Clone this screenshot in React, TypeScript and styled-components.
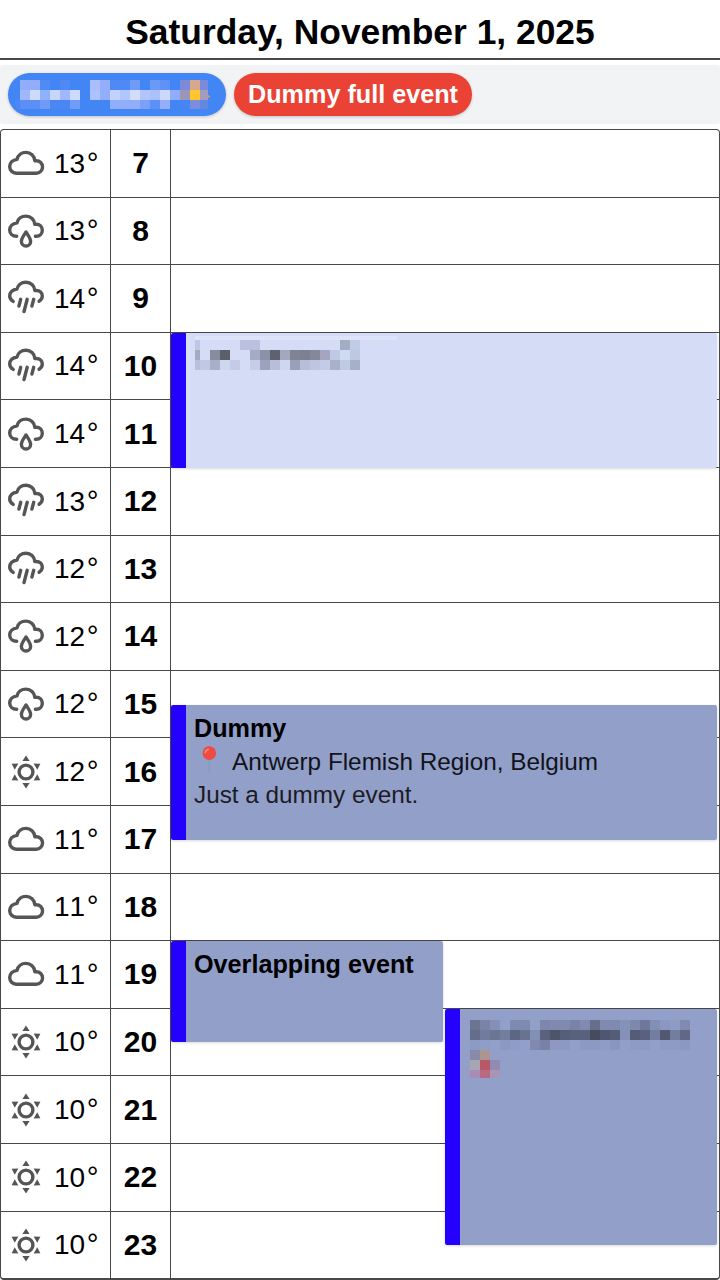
import React from "react";
import styled, { createGlobalStyle } from "styled-components";

const ROW = 67.6;
const FIRST_HOUR = 7;

const GlobalStyle = createGlobalStyle`
  * { box-sizing: border-box; }
  body {
    margin: 0;
    background: #fff;
    color: #000;
    font-family: "Liberation Sans", Arial, sans-serif;
  }
`;

const Page = styled.main`
  width: 720px;
  height: 1280px;
  display: flex;
  flex-direction: column;
  overflow: hidden;
`;

const Title = styled.h1`
  margin: 0;
  height: 60px;
  padding-top: 1px;
  border-bottom: 2px solid #48484a;
  font-size: 35.4px;
  line-height: 62px;
  font-weight: 700;
  text-align: center;
  white-space: nowrap;
`;

const AllDayBar = styled.section`
  display: flex;
  gap: 8px;
  height: 59px;
  margin: 5px 0;
  padding: 8px;
  border-radius: 3px;
  background: #f1f3f4;
`;

const Pill = styled.div<{ $color: string; $width: number }>`
  display: flex;
  align-items: center;
  justify-content: center;
  width: ${(p) => p.$width}px;
  height: 43px;
  border-radius: 21.5px;
  background: ${(p) => p.$color};
  color: #fff;
  font-size: 25.2px;
  font-weight: 700;
  white-space: nowrap;
  box-shadow: 0 1px 3px rgba(0, 0, 0, 0.2);
`;

const Schedule = styled.section`
  display: grid;
  grid-template-columns: 109px 60px 1fr;
  height: 1151px;
  border: solid #48484a;
  border-width: 1px 1px 2px;
  border-radius: 4px;
`;

const Column = styled.div`
  position: relative;
  & + & {
    border-left: 1px solid #48484a;
  }
`;

const Cell = styled.div`
  height: ${ROW}px;
  border-top: 1px solid #48484a;
  display: flex;
  align-items: center;
  font-kerning: none;
  &:first-child {
    height: ${ROW - 1}px;
    border-top: 0;
  }
`;

const WeatherCell = styled(Cell)`
  padding-left: 6px;
  gap: 9px;
`;

const Temperature = styled.span`
  display: flex;
  align-items: baseline;
  font-size: 28px;
  line-height: 32px;
  padding-bottom: 0.2px;
`;

const Degree = styled.span`
  margin-left: 1.5px;
  font-size: 29.5px;
  line-height: 32px;
`;

const HourCell = styled(Cell)`
  justify-content: center;
  font-size: 30px;
  font-weight: 700;
`;

const Icon = styled.svg`
  flex: none;
  fill: none;
  stroke: #555;
  stroke-width: 3.4;
  stroke-linecap: round;
  stroke-linejoin: round;
`;

const EventCard = styled.article<{
  $start: number;
  $hours: number;
  $half?: "left" | "right";
  $light?: boolean;
}>`
  position: absolute;
  top: ${(p) => (p.$start - FIRST_HOUR) * ROW}px;
  left: ${(p) => (p.$half === "right" ? "274px" : "0")};
  width: ${(p) => (p.$half ? 272 : 546)}px;
  height: ${(p) => p.$hours * ROW - 0.2}px;
  padding: 7px 8px;
  border-left: 15px solid #2400ff;
  border-radius: 2px;
  background: ${(p) => (p.$light ? "#d4dcf6" : "#929fc9")};
  box-shadow: 0 1px 3px rgba(0, 0, 0, 0.15);
`;

const EventTitle = styled.h2`
  margin: 0;
  font-size: 25.2px;
  line-height: 33px;
  font-weight: 700;
  white-space: nowrap;
`;

const EventLine = styled.p<{ $faded?: boolean }>`
  margin: 0;
  display: flex;
  align-items: center;
  font-size: 24.3px;
  line-height: 33px;
  color: ${(p) => (p.$faded ? "#1a1c25" : "#111319")};
  white-space: nowrap;
`;

const Pin = styled.svg`
  flex: none;
  margin: -2px 8px 0 0;
`;

const Redaction = styled.svg<{ $dx?: number; $dy?: number }>`
  display: block;
  flex: none;
  margin: ${(p) => p.$dy ?? 0}px 0 0 ${(p) => p.$dx ?? 0}px;
`;

type Block = [x: number, y: number, w: number, h: number, color: string];

function Mosaic({ w, h, dx, dy, blocks }: { w: number; h: number; dx?: number; dy?: number; blocks: Block[] }) {
  return (
    <Redaction width={w} height={h} $dx={dx} $dy={dy} shapeRendering="crispEdges" aria-hidden>
      {blocks.map(([x, y, bw, bh, c], i) => (
        <rect key={i} x={x} y={y} width={bw} height={bh} fill={c} />
      ))}
    </Redaction>
  );
}

/* Expands space separated colours into 10px blocks; "-" leaves a gap. */
const strip = (x: number, y: number, h: number, colors: string): Block[] =>
  colors
    .split(" ")
    .map((c, i): Block => [x + i * 10, y, 10, h, c === "-" ? "none" : "#" + c]);

const pillBlocks: Block[] = [
  ...strip(4, 0, 10, "92adfa 92adfa 4f8bf5 - 4f89f5 - - a9bffc 94aefa 4e89f5 4e89f5 6d9bf6 - 6b99f7 5f92f6 - 7d8ad6 d7a88d"),
  [184, 0, 8, 10, "#7b8bdc"],
  ...strip(4, 10, 10, "a0b7fb ccdafd 8fb0fb c7d6fd a0b8fb ccdafd - adc2fc 92adfa c3d1fd b1c6fc d2dcfb b1c4fb acc1fb ccd9fd 91acfb 9c95bb fdc62f"),
  [184, 10, 8, 10, "#a49cbf"],
  [0, 20, 4, 9, "#4b87f5"],
  ...strip(4, 20, 9, "5b8ff6 5b8ff6 6f9bf7 4a87f5 4a87f5 709cf7 - - - 92adfa 92adfa 92adfa 7ba0f8 5a90f7 94aefa - 4686f3 7d8ddb"),
  [184, 20, 8, 9, "#6488df"],
  [192, 15, 1, 3, "#c99a55"],
  [193, 16, 1, 1, "#e0a12f"],
];

const morningBlocks: Block[] = [
  [0, 0, 202, 4, "#dde3f8"],
  [0, 4, 5, 10, "#bfc8e2"],
  ...strip(45, 4, 10, "bac0dd bac0dd - - - - - - - - a1adc3 c0cbe5"),
  [0, 14, 5, 10, "#a4abc1"],
  ...strip(15, 14, 10, "878c9f 5c6069 - - a5abc2 8b91a6 5e6170 a2a8be 7e8395 7d8091 83889b a4a5be bec9e3 cfd9f1 bdc8e2"),
  [0, 24, 5, 10, "#b9c0dc"],
  ...strip(5, 24, 10, "c1c8e4 a7b0c7 ced7f0 c3cbe6 - c5cde8 9ca2ba b8bed9 ced6f0 9aa0b7 b8bed8 bfc4e0 c3cbe5 a7b1c7 bfcae4 a5b1c6"),
];

const eveningBlocks: Block[] = [
  ...strip(0, 0, 10, "6b7491 7a83a6 8390b7 929fc9 7f8ab0 7f8ab0 - 7c87ab 7f8aaf 7f8aaf 7883a8 7f8bb0 66708d 7f8aaf 7f8aaf 8691b9 7d88ad 6e7898 8390b6 8b97c0 8f9bc5 808bb2"),
  ...strip(0, 10, 10, "646d8a 717b9c 6b7594 737d9e 5e6684 697391 8290b5 5a617d 4e546c 575e79 5a617d 5a617d 464c60 4f566f 555c77 8591b8 555c77 596180 737d9f 51586f 737d9f 606885"),
  ...strip(0, 20, 10, "8d9ac4 909dc7 - 8c97c2 909cc7 - 808ab0 7782a6 8d99c2 8d99c2 - 8d99c2 8d99c2 909cc6 8a96bf - 8f9bc5 8e9ac4 - 8f9bc5 8f9bc5 8c98c1"),
  ...strip(0, 30, 10, "888aa8 aa9591"),
  ...strip(0, 40, 10, "a7a5b4 b85768 918ab2"),
  ...strip(0, 50, 8, "a98cb4 b76a82 a995b3"),
];

type Weather = "cloud" | "drop" | "rain" | "sun";

function WeatherIcon({ kind }: { kind: Weather }) {
  return (
    <Icon width="38" height="36" viewBox="0 0 38 36">
      {kind === "cloud" && (
        <path d="M9.2 28.2H29.3a6.2 6.2 0 0 0 0-12.5H27.8C27.5 10.8 23.7 7.4 19 7.4c-4.5 0-8.1 2.9-9 7C5.7 15 2.7 17.8 2.7 21.6a6.5 6.6 0 0 0 6.5 6.6Z" />
      )}
      {kind === "drop" && (
        <>
          <path d="M9.7 23.3C5.5 23.3 2.7 20.7 2.7 17.1C2.7 13.3 5.7 10.5 10 9.9C10.9 5.8 14.5 3.1 19 3.1C23.7 3.1 27.5 6.5 27.8 11.3H29.3c3.5 0 6 2.6 6 6s-2.5 6-6 6h-.9" />
          <path d="M19 19C17 22.1 14.4 25.3 14.4 28.4a4.6 4.6 0 0 0 9.2 0C23.6 25.3 21 22.1 19 19Z" />
        </>
      )}
      {kind === "rain" && (
        <>
          <path d="M6.2 21.4C4 20.1 2.7 18.4 2.7 16.1C2.7 12.3 5.7 9.6 10 9C10.9 4.9 14.5 2.3 19 2.3C23.7 2.3 27.5 5.7 27.8 10.5H29.3c3.5 0 6 2.4 6 5.6 0 2.3-1.2 4-3.2 5.2" />
          <path d="M13.7 19.3 11.9 26.1M20.2 19.3 17 31.6M26.7 19.3 24.9 26.1" />
        </>
      )}
      {kind === "sun" && (
        <g transform="translate(19 18)">
          <circle r="6.9" strokeWidth="3.4" />
          {[0, 60, 120, 180, 240, 300].map((a) => (
            <path key={a} d="M0-16.6 3.6-10.9H-3.6Z" fill="#555" stroke="none" transform={`rotate(${a})`} />
          ))}
        </g>
      )}
    </Icon>
  );
}

const forecast: [Weather, number][] = [
  ["cloud", 13], ["drop", 13], ["rain", 14], ["rain", 14], ["drop", 14], ["rain", 13],
  ["rain", 12], ["drop", 12], ["drop", 12], ["sun", 12], ["cloud", 11], ["cloud", 11],
  ["cloud", 11], ["sun", 10], ["sun", 10], ["sun", 10], ["sun", 10],
];

export default function App() {
  return (
    <>
      <GlobalStyle />
      <Page>
        <Title>Saturday, November 1, 2025</Title>
        <AllDayBar>
          <Pill $color="#4285f4" $width={218}>
            <Mosaic w={194} h={29} dx={-8} blocks={pillBlocks} />
          </Pill>
          <Pill $color="#ea4335" $width={238}>Dummy full event</Pill>
        </AllDayBar>
        <Schedule>
          <Column>
            {forecast.map(([kind, degrees], i) => (
              <WeatherCell key={i}>
                <WeatherIcon kind={kind} />
                <Temperature>{degrees}<Degree>°</Degree></Temperature>
              </WeatherCell>
            ))}
          </Column>
          <Column>
            {forecast.map((_, i) => (
              <HourCell key={i}>{FIRST_HOUR + i}</HourCell>
            ))}
          </Column>
          <Column>
            {forecast.map((_, i) => (
              <Cell key={i} />
            ))}
            <EventCard $start={10} $hours={2} $light>
              <Mosaic w={202} h={34} dx={1} dy={-4} blocks={morningBlocks} />
            </EventCard>
            <EventCard $start={15.5} $hours={2}>
              <EventTitle>Dummy</EventTitle>
              <EventLine>
                <Pin width="30" height="30" viewBox="0 0 30 30">
                  <path d="M14.3 12h2l-.5 15.5-.5 1.2-.5-1.2Z" fill="#7ba0bd" />
                  <circle cx="15.3" cy="8.1" r="6.8" fill="#ef4b43" />
                  <path d="M10.6 7.4q.5-3.3 3.8-3.8 1.6.2.4 1.5-2.4.8-3 3-.8.8-1.2-.7Z" fill="#f58a7d" />
                </Pin>
                Antwerp Flemish Region, Belgium
              </EventLine>
              <EventLine $faded>Just a dummy event.</EventLine>
            </EventCard>
            <EventCard $start={19} $hours={1.5} $half="left">
              <EventTitle>Overlapping event</EventTitle>
            </EventCard>
            <EventCard $start={20} $hours={3.5} $half="right">
              <Mosaic w={220} h={58} dx={2} dy={4} blocks={eveningBlocks} />
            </EventCard>
          </Column>
        </Schedule>
      </Page>
    </>
  );
}
